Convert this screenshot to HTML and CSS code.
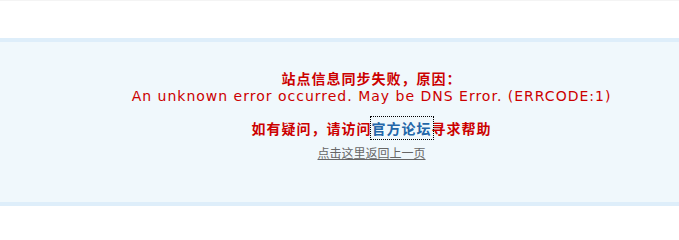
FILE: index.html
```html
<!DOCTYPE html>
<html lang="zh-CN">
<head>
<meta charset="utf-8">
<title>提示信息</title>
<link rel="stylesheet" href="styles.css">
</head>
<body>
<div class="top"></div>
<div class="box">
  <div class="msg">
    <p class="title">站点信息同步失败，原因：</p>
    <p class="err">An unknown error occurred. May be DNS Error. (ERRCODE:1)</p>
    <p class="help">如有疑问，请访问<a class="forum" href="#">官方论坛</a>寻求帮助</p>
    <p class="back"><a href="#">点击这里返回上一页</a></p>
  </div>
</div>
</body>
</html>
```
FILE: styles.css
```css
html, body {
  margin: 0;
  padding: 0;
  background: #ffffff;
}
body {
  font-family: "Noto Sans CJK SC", "DejaVu Sans", sans-serif;
  font-size: 12px;
}
.top {
  height: 38px;
  border-top: 1px solid #f4f4f4;
  box-sizing: border-box;
}
.box {
  background: #f0f8fc;
  border-top: 4px solid #deeefa;
  border-bottom: 4px solid #deeefa;
  height: 160px;
  padding-left: 64px;
}
.msg {
  padding-top: 27px;
  text-align: center;
}
.msg p {
  margin: 0;
}
.title {
  color: #cc0000;
  font-weight: bold;
  font-size: 14px;
  letter-spacing: 1px;
  line-height: 18px;
}
.err {
  color: #cc0000;
  font-family: "DejaVu Sans", sans-serif;
  font-size: 14px;
  letter-spacing: 1px;
  line-height: 18px;
}
.help {
  color: #cc0000;
  font-weight: bold;
  font-size: 14px;
  letter-spacing: 1px;
  line-height: 18px;
  margin-top: 14px !important;
}
.forum {
  color: #2366a8;
  text-decoration: none;
  outline: 1px dotted #000;
  outline-offset: 1px;
}
.back {
  margin-top: 8px !important;
  line-height: 16px;
}
.back a {
  color: #666666;
  text-decoration: underline;
}
```
